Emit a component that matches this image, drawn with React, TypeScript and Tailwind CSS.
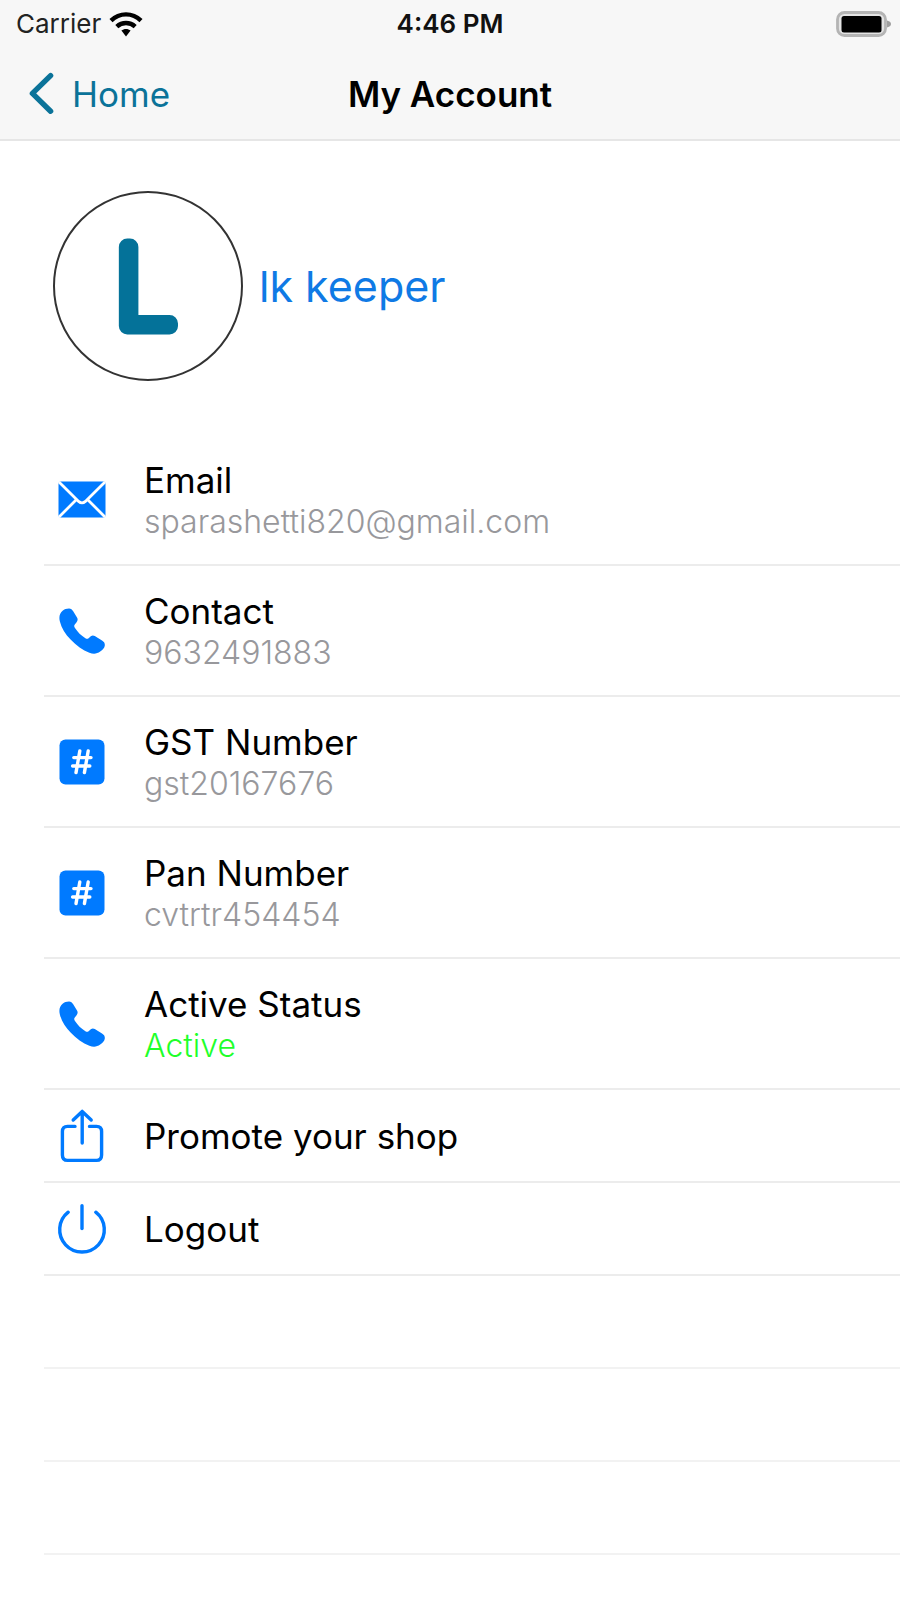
import type { ReactNode } from 'react'

type RowProps = {
	icon: ReactNode
	label: string
	value?: string
	valueClass?: string
}

const WifiIcon = () => (
	<svg width="34" height="25" viewBox="0 0 34 25" aria-hidden="true">
		<g fill="none" stroke="#000" strokeWidth="4.4">
			<path d="M2 8.6C10.5 0.3 23.5 0.3 32 8.6" />
			<path d="M7.8 14.6C13 9.8 21 9.8 26.2 14.6" />
		</g>
		<path d="M12.4 18.6C15 16.4 19 16.4 21.6 18.6L17 24.4Z" />
	</svg>
)

const BatteryIcon = () => (
	<svg width="56" height="26" viewBox="0 0 56 26" aria-label="Battery full">
		<rect x="1.5" y="1.5" width="48" height="23" rx="7" fill="#e4e4e4" stroke="#b4b4b4" strokeWidth="2.8" />
		<rect x="5.5" y="5" width="40" height="16.5" rx="2.5" fill="#000" />
		<path d="M51 9.5C54.2 10.3 55 11.6 55 13S54.2 15.7 51 16.5Z" fill="#a0a0a0" />
	</svg>
)

const MailIcon = () => (
	<svg width="48" height="37" viewBox="0 0 48 37" aria-hidden="true">
		<rect x="0.5" y="0.5" width="47" height="36" rx="2" fill="#007aff" />
		<g fill="none" stroke="#fff" strokeWidth="2.8">
			<path d="M1 1L20.6 20.4Q24 23.4 27.4 20.4L47 1" />
			<path d="M1 36L18 19M47 36L30 19" />
		</g>
	</svg>
)

const PhoneIcon = () => (
	<svg width="46" height="46" viewBox="0 0 46 46" fill="#007aff" aria-hidden="true">
		<path d="M10 0.4C12 0.4 13.2 1.6 14.2 3.2L18 9.4C19 11.2 18.8 12.6 17.6 14.2L15.8 16.4C15 17.5 15 18.5 15.8 19.8C18.6 24.2 22.2 27.6 26.4 30.3C27.6 31 28.6 31 29.6 30.2L31.8 28.3C33.2 27.2 34.4 27.2 35.8 28L43 32.6C45 33.9 46 35.2 45.8 37.4C45.6 39.6 43.6 41.8 41.2 43.6C38 46 34.4 46.4 30.4 44.8C23.6 42.2 17.4 37.6 11.6 31.6C6.4 26.2 2.4 20 0.8 13.2C-0.2 9 0.6 5.2 3.6 2.8C5.4 1.2 7.4 0.4 10 0.4Z" />
	</svg>
)

const HashIcon = () => (
	<svg width="46" height="46" viewBox="0 0 46 46" aria-hidden="true">
		<rect x="0.5" y="0.5" width="45" height="45" rx="6" fill="#007aff" />
		<g stroke="#fff" strokeWidth="3.4" strokeLinecap="round">
			<path d="M20.8 12L17 33.6M29.2 12L25.4 33.6" />
			<path d="M14.8 18.6H32M13.6 27H30.8" />
		</g>
	</svg>
)

const ShareIcon = () => (
	<svg
		width="44"
		height="54"
		viewBox="0 0 44 54"
		fill="none"
		stroke="#007aff"
		strokeWidth="3.4"
		strokeLinecap="round"
		strokeLinejoin="round"
		aria-hidden="true"
	>
		<path d="M15 17.4H7.5Q2.4 17.4 2.4 22.5V46Q2.4 51.4 7.5 51.4H36.5Q41.6 51.4 41.6 46V22.5Q41.6 17.4 36.5 17.4H29.5" />
		<path d="M22.2 34V2.6M13.2 11L22.2 2.4L31.2 11" />
	</svg>
)

const PowerIcon = () => (
	<svg
		width="50"
		height="50"
		viewBox="0 0 50 50"
		fill="none"
		stroke="#007aff"
		strokeWidth="3.4"
		strokeLinecap="round"
		aria-hidden="true"
	>
		<path d="M11.2 8.2A22.3 22.3 0 1 0 38.8 8.2" />
		<path d="M25 1.8V24.5" />
	</svg>
)

const DetailRow = ({ icon, label, value, valueClass = 'text-[#98989c]' }: RowProps) => (
	<li className="ml-11 flex h-[131px] items-center gap-8 border-b-2 border-[#ececec] pl-2">
		<span className="flex w-[60px] shrink-0 justify-center">{icon}</span>
		<div>
			<div className="text-[35px] leading-[44px]">{label}</div>
			<div className={`text-[32px] leading-10 font-light ${valueClass}`}>{value}</div>
		</div>
	</li>
)

const ActionRow = ({ icon, label }: RowProps) => (
	<li className="ml-11 h-[93px] border-b-2 border-[#ececec]">
		<button type="button" className="flex h-full w-full items-center gap-8 pl-2 text-left">
			<span className="flex w-[60px] shrink-0 justify-center">{icon}</span>
			<span className="text-[35px] leading-[44px]">{label}</span>
		</button>
	</li>
)

export default function App() {
	return (
		<div className="min-h-screen bg-white font-['Inter','Liberation_Sans',sans-serif] text-black">
			<header className="border-b-2 border-[#e6e6e6] bg-[#f7f7f7]">
				<div className="grid h-12 grid-cols-3 items-center px-4 text-[26px] leading-8">
					<div className="flex items-center gap-2 text-[#222]">
						Carrier
						<WifiIcon />
					</div>
					<div className="text-center font-semibold text-[#111]">4:46 PM</div>
					<div className="-mr-2 flex justify-end">
						<BatteryIcon />
					</div>
				</div>
				<nav className="grid h-[91px] grid-cols-3 items-center px-7 text-[35px] leading-[44px]">
					<a href="#home" className="flex items-center gap-4 text-[#0b7399]">
						<svg width="28" height="44" viewBox="0 0 28 44" fill="none" aria-hidden="true">
							<path
								d="M22.6 3.6L4.4 21.4L22.6 39.2"
								stroke="#0b7399"
								strokeWidth="5.4"
								strokeLinecap="round"
								strokeLinejoin="round"
							/>
						</svg>
						Home
					</a>
					<h1 className="text-center font-semibold whitespace-nowrap">My Account</h1>
				</nav>
			</header>

			<main>
				<section className="flex items-center gap-4 pt-[50px] pb-[54px] pl-[53px]">
					<div className="flex size-[190px] items-center justify-center rounded-full border-2 border-[#333]">
						<svg width="186" height="186" viewBox="0 0 186 186" aria-hidden="true">
							<text
								x="60"
								y="133"
								fontSize="109"
								fontWeight="100"
								fill="#047299"
								stroke="#047299"
								strokeWidth="17"
								strokeLinejoin="round"
							>
								L
							</text>
						</svg>
					</div>
					<p className="text-[43px] leading-[56px] text-[#0f7ae5]">lk keeper</p>
				</section>

				<ul>
					<DetailRow icon={<MailIcon />} label="Email" value="sparashetti820@gmail.com" />
					<DetailRow icon={<PhoneIcon />} label="Contact" value="9632491883" />
					<DetailRow icon={<HashIcon />} label="GST Number" value="gst20167676" />
					<DetailRow icon={<HashIcon />} label="Pan Number" value="cvtrtr454454" />
					<DetailRow icon={<PhoneIcon />} label="Active Status" value="Active" valueClass="text-[#1fff2b]" />
					<ActionRow icon={<ShareIcon />} label="Promote your shop" />
					<ActionRow icon={<PowerIcon />} label="Logout" />
				</ul>

				{/* empty cells below the last row */}
				<div aria-hidden="true">
					<div className="ml-11 h-[93px] border-b-2 border-[#f2f2f2]" />
					<div className="ml-11 h-[93px] border-b-2 border-[#f2f2f2]" />
					<div className="ml-11 h-[93px] border-b-2 border-[#f2f2f2]" />
				</div>
			</main>
		</div>
	)
}
